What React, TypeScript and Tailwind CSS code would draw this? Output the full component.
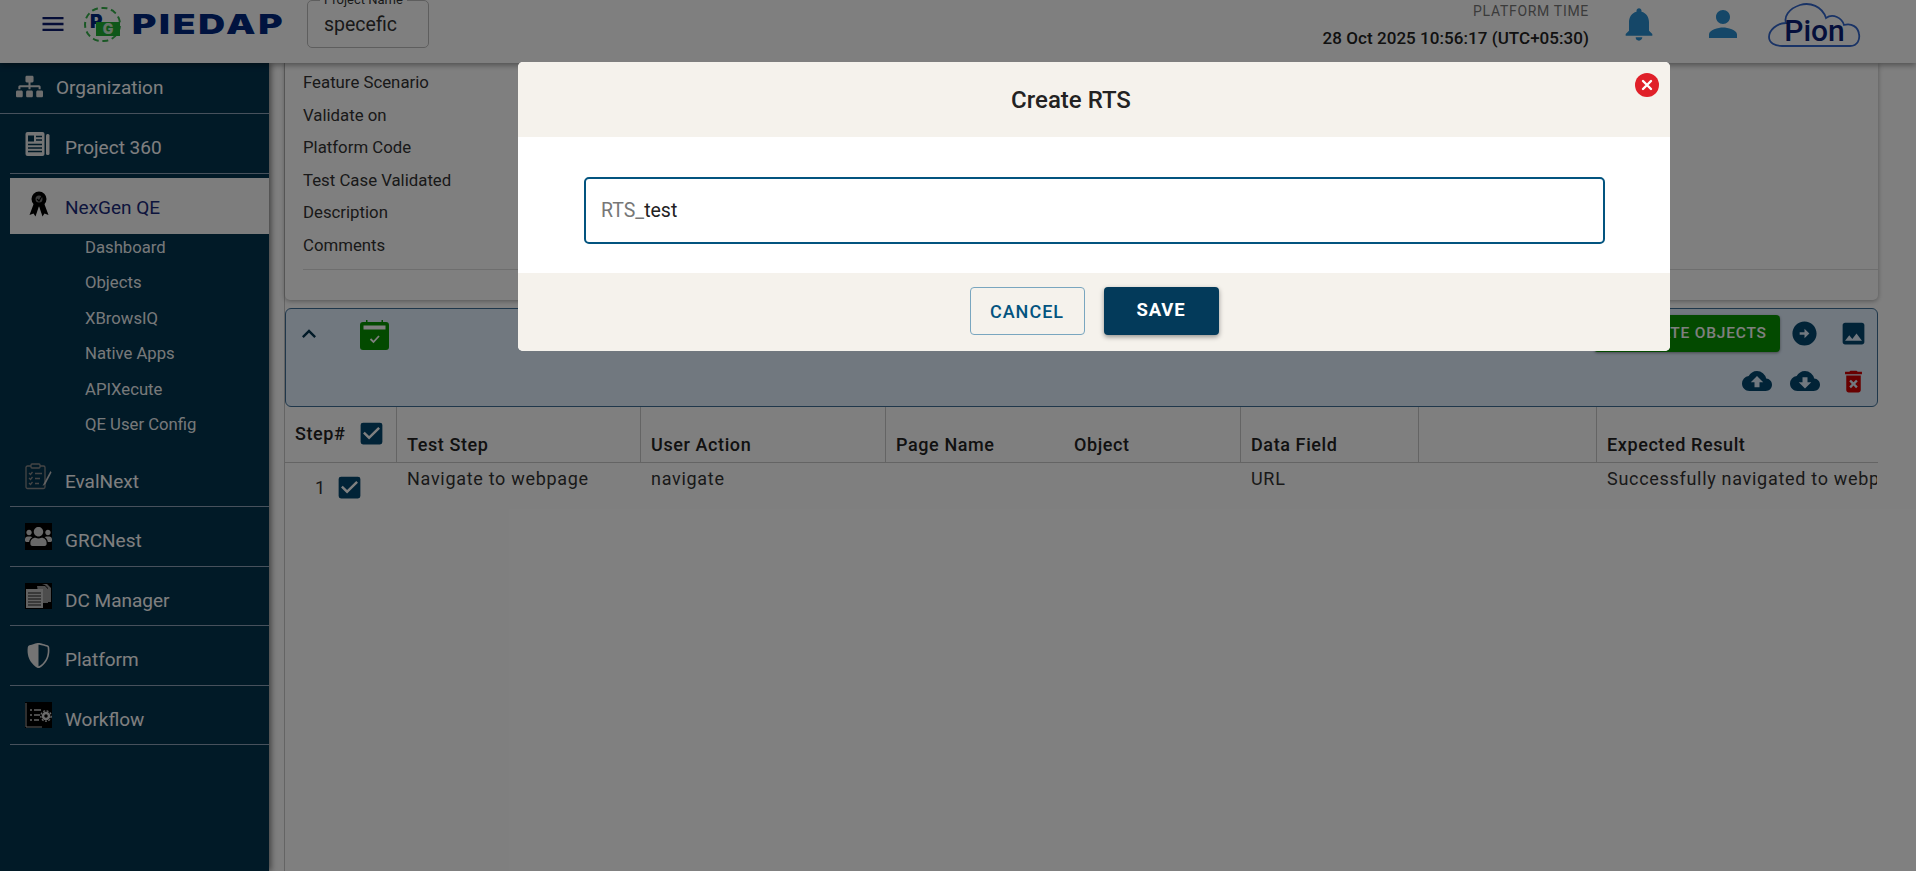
import { FaSitemap, FaUsers } from "react-icons/fa";
import { BsShieldShaded } from "react-icons/bs";
import {
  MdMenu,
  MdNotifications,
  MdPerson,
  MdKeyboardArrowUp,
  MdArrowCircleRight,
  MdImage,
  MdCloudUpload,
  MdCloudDownload,
  MdDeleteForever,
  MdCheckBox,
} from "react-icons/md";

const NewsIcon = () => (
  <svg width="25" height="25" viewBox="0 0 25 25">
    <rect x="0.500" y="1" width="19" height="24" rx="2" fill="#eaeaea" />
    <rect x="21" y="3" width="3.500" height="21" rx="1.500" fill="#eaeaea" />
    <rect x="3" y="4.500" width="6" height="6" fill="#03344f" />
    <path d="M11 5.500 h6 M11 9 h6 M3 13.500 h14 M3 17 h14 M3 20.500 h14" stroke="#03344f" strokeWidth="1.600" />
  </svg>
);

const AwardIcon = () => (
  <svg width="20" height="26" viewBox="0 0 20 26" fill="#000">
    <path d="M5 12 L0.500 24 L4.500 22.500 L6.500 25.500 L10 15 L13.500 25.500 L15.500 22.500 L19.500 24 L15 12 Z" />
    <circle cx="10" cy="8" r="7.500" />
    <circle cx="10" cy="8" r="3.500" fill="#777" />
    <path d="M8 8 L10 10 L13 5" stroke="#000" strokeWidth="1.200" fill="none" />
  </svg>
);

const EvalIcon = () => (
  <svg width="27" height="27" viewBox="0 0 27 27" fill="none" stroke="#8a8a8a" strokeWidth="1.300">
    <rect x="1" y="3" width="19" height="22.500" rx="1.500" />
    <rect x="6" y="1" width="9" height="4" rx="1" fill="#03344f" />
    <path d="M4 10 l1.500 1.500 l2 -2.500 M4 15 l1.500 1.500 l2 -2.500 M4 20 l1.500 1.500 l2 -2.500" />
    <path d="M10 10.500 h7 M10 15.500 h5 M10 20.500 h4" />
    <path d="M25.500 8 L19 20 L17.500 23 L20.500 21 L26.500 9.500 Z" fill="#c8c8c8" stroke="none" />
  </svg>
);

const DocsIcon = () => (
  <svg width="27" height="26" viewBox="0 0 27 26" className="bg-black">
    <path d="M12 3 h8 l3 3 v14 h-8 z M17 1 h5 l4 4 v14 h-3 V5 l-3 -3 z" fill="#9a9a9a" />
    <rect x="1" y="6" width="17" height="19" fill="#c4c4c4" />
    <path d="M3 10 h13 M3 13 h13 M3 16 h13 M3 19 h13 M3 22 h13" stroke="#222" strokeWidth="1" />
  </svg>
);

const FlowIcon = () => (
  <svg width="27" height="26" viewBox="0 0 27 26" className="bg-black">
    <path d="M1 1 v24 h16" stroke="#bbb" strokeWidth="1" fill="none" />
    <path d="M5 8 h2 M9 8 h7 M5 13 h2 M9 13 h6 M5 18 h2 M9 18 h5" stroke="#c8c8c8" strokeWidth="1.500" />
    <circle cx="21" cy="14" r="3" fill="none" stroke="#d8d8d8" strokeWidth="2.500" />
    <circle cx="21" cy="14" r="5.200" fill="none" stroke="#d8d8d8" strokeWidth="1.300" strokeDasharray="2 1.500" />
  </svg>
);

const CalendarCheck = () => (
  <svg width="29" height="30" viewBox="0 0 29 30">
    <path d="M6 0 h1.500 v3 h-1.500 z M21.500 0 h1.500 v3 h-1.500 z" fill="#079500" />
    <rect x="0" y="2" width="29" height="28" rx="3" fill="#079500" />
    <rect x="3.500" y="5.500" width="22" height="4" fill="#fff" />
    <path d="M10.500 19 L13.500 22 L19 16" stroke="#fff" strokeWidth="1.800" fill="none" />
  </svg>
);

const PiedapLogo = () => (
  <div className="flex items-center">
    <div className="relative w-[37px] h-[35px] rounded-full border-2 border-dashed border-[#34b04a]">
      <span className="absolute left-[4px] top-[3px] text-[19px] leading-[20px] font-black text-[#00277f] font-['Inter',sans-serif]">P</span>
      <span className="absolute left-[10px] top-[13px] w-[24px] h-[14px] bg-[#1fae33] text-[14px] leading-[14px] text-center font-black text-[#cfe8d0] font-['Inter',sans-serif]">G</span>
    </div>
    <span className="ml-[11px] w-[152px] text-[27px] leading-none font-black tracking-[2px] text-[#00277f] font-['Inter',sans-serif] scale-x-[1.375] origin-left">PIEDAP</span>
  </div>
);

const PionLogo = () => (
  <div className="relative w-[93px] h-[46px] flex items-end justify-center">
    <svg width="93" height="46" viewBox="0 0 93 46" fill="none" stroke="#3366cc" strokeWidth="1.800" className="absolute left-0 top-0">
      <path d="M14 45 H82 C90 45 92 38 91 33 C90 26 84 22 76 24 C74 17 65 12 58 17 C54 5 42 1 32 4 C20 8 16 16 18 22 C8 22 1 30 1 36 C1 42 7 45 14 45 Z" />
    </svg>
    <span className="relative -mb-[1px] text-[30px] leading-[34px] font-medium text-[#0a1f78] font-['Roboto',sans-serif]">Pion</span>
  </div>
);

const SubItem = ({ label }: { label: string }) => (
  <div className="h-[35.500px] pl-[85px] flex items-center text-[16.700px] text-white/95">{label}</div>
);

const NavItem = ({ label, icon }: { label: string; icon: React.ReactNode }) => (
  <div className="ml-[10px] h-[59.500px] border-b border-[#8fa3b8] pt-[10px] flex items-center">
    <span className="w-[55px] pl-[15px] pb-[10px] shrink-0">{icon}</span>
    <span className="text-[19px] text-white">{label}</span>
  </div>
);

const Sidebar = () => (
  <aside className="w-[269px] shrink-0 bg-[#03344f] text-[#fff] shadow-[2px_0_6px_rgba(0,0,0,0.5)] z-10">
    <div className="h-[51px] border-b border-[#8fa3b8] flex items-center">
      <FaSitemap className="ml-[16px] mr-[13px] mb-[4px] text-[#dcdcdc]" size={27} />
      <span className="text-[19px]">Organization</span>
    </div>
    <NavItem label="Project 360" icon={<NewsIcon />} />
    <div className="ml-[10px] mt-[4px] h-[56px] bg-[#fbfbfb] pt-[6px] flex items-center">
      <span className="w-[55px] pl-[19px] pb-[10px] shrink-0"><AwardIcon /></span>
      <span className="text-[19px] text-[#1a2a7a]">NexGen QE</span>
    </div>
    <div className="-mt-[4px]">
      <SubItem label="Dashboard" />
      <SubItem label="Objects" />
      <SubItem label="XBrowsIQ" />
      <SubItem label="Native Apps" />
      <SubItem label="APIXecute" />
      <SubItem label="QE User Config" />
    </div>
    <div className="mt-[5px]">
      <NavItem label="EvalNext" icon={<EvalIcon />} />
      <NavItem label="GRCNest" icon={<span className="block w-[27px] h-[27px] bg-black"><FaUsers className="text-[#d0d0d0]" size={27} /></span>} />
      <NavItem label="DC Manager" icon={<DocsIcon />} />
      <NavItem label="Platform" icon={<BsShieldShaded className="text-[#e8e8e8] ml-[1px]" size={25} />} />
      <NavItem label="Workflow" icon={<FlowIcon />} />
    </div>
  </aside>
);

const Header = () => (
  <header className="h-[63px] shrink-0 bg-white shadow-[0_2px_6px_rgba(0,0,0,0.4)] z-20 flex items-center pb-[15px] pl-[39px] pr-[55px]">
    <MdMenu className="text-[#0b1a6e]" size={28} />
    <div className="ml-[17px]"><PiedapLogo /></div>
    <div className="relative ml-[23px] w-[122px] h-[48px] border border-[#bdbdbd] rounded-[5px] flex items-center pl-[16px] pt-[1px] text-[19.500px] text-[#333]">
      specefic
      <span className="absolute left-[12px] -top-[9px] px-[4px] bg-white text-[13px] leading-[16px] text-[#333]">Project Name</span>
    </div>
    <div className="ml-auto mr-[1px] text-right">
      <div className="text-[14px] leading-[20px] tracking-[0.7px] text-[#777]">PLATFORM TIME</div>
      <div className="mt-[7px] text-[17px] leading-[20px] font-medium tracking-[0.05px] text-[#222]">28 Oct 2025 10:56:17 (UTC+05:30)</div>
    </div>
    <MdNotifications className="ml-[29px] text-[#2a8fd0]" size={40} />
    <MdPerson className="ml-[43px] text-[#2a8fd0]" size={42} />
    <div className="ml-[24px]"><PionLogo /></div>
  </header>
);

const TopCard = () => (
  <div className="rounded-b-[5px] bg-white shadow-[0_1px_5px_rgba(0,0,0,0.35)] pl-[18px] h-[237px]">
    <div className="pt-[7px] text-[16.800px] text-[#333] leading-[24px] flex flex-col gap-[8.500px]">
      <div>Feature Scenario</div>
      <div>Validate on</div>
      <div>Platform Code</div>
      <div>Test Case Validated</div>
      <div>Description</div>
      <div>Comments</div>
    </div>
    <div className="mt-[12px] border-t border-[#ddd]" />
  </div>
);

const ActionPanel = () => (
  <div className="mt-[8px] h-[99px] rounded-[6px] border border-[#3f6f96] bg-[#e2f0ff] flex justify-between pl-[9px] pr-[9px] pt-[6px]">
    <div className="flex items-start pt-[4px]">
      <MdKeyboardArrowUp className="text-[#03344f] mt-[1px]" size={28} />
      <span className="ml-[37px] mt-[1px]"><CalendarCheck /></span>
    </div>
    <div>
      <div className="flex items-center">
        <button className="w-[186px] h-[37px] rounded-[4px] bg-[#079500] text-[15.500px] font-medium tracking-[0.8px] text-white shadow-[0_1px_3px_rgba(0,0,0,0.4)]">
          GENERATE OBJECTS
        </button>
        <MdArrowCircleRight className="ml-[10px] text-[#03466e]" size={29} />
        <MdImage className="ml-[20px] text-[#03466e]" size={29} />
      </div>
      <div className="mt-[14px] flex justify-end items-center">
        <MdCloudUpload className="text-[#03466e]" size={30} />
        <MdCloudDownload className="ml-[18px] text-[#03466e]" size={30} />
        <MdDeleteForever className="ml-[19px] text-[#d00000]" size={29} />
      </div>
    </div>
  </div>
);

const Check = ({ className }: { className: string }) => <MdCheckBox className={`text-[#03466e] ${className}`} size={29} />;

const headCell = "h-[55px] border-r border-[#c8c8c8] pl-[10px] pb-[4px] flex items-end font-medium text-[#222]";

const StepTable = () => (
  <div className="text-[18px] tracking-[0.6px]">
    <div className="grid grid-cols-[112px_244px_245px_178px_177px_178px_178px_280px] border-b border-[#c8c8c8]">
      <div className="h-[55px] border-r border-[#c8c8c8] flex items-center pl-[10px] pb-[3px] font-medium text-[#222]">
        Step# <Check className="ml-[11px]" />
      </div>
      <div className={headCell}>Test Step</div>
      <div className={headCell}>User Action</div>
      <div className="h-[55px] pl-[10px] pb-[4px] flex items-end font-medium text-[#222]">Page Name</div>
      <div className={headCell}>Object</div>
      <div className={headCell}>Data Field</div>
      <div className={headCell} />
      <div className="h-[55px] pl-[10px] pb-[4px] flex items-end font-medium text-[#222] whitespace-nowrap">Expected Result</div>
    </div>
    <div className="grid grid-cols-[112px_244px_245px_178px_177px_178px_178px_280px] text-[#333] leading-[24px] tracking-[0.7px] pt-[4px]">
      <div className="flex items-center pl-[30px] pt-[6px] self-start">
        1 <Check className="ml-[9px]" />
      </div>
      <div className="pl-[10px]">Navigate to webpage</div>
      <div className="pl-[10px]">navigate</div>
      <div />
      <div />
      <div className="pl-[10px]">URL</div>
      <div />
      <div className="pl-[10px] whitespace-nowrap overflow-hidden">Successfully navigated to webpage</div>
    </div>
  </div>
);

const CreateRtsModal = () => (
  <div className="absolute inset-0 z-50 bg-black/50">
    <div className="relative mt-[62px] ml-[518px] w-[1152px] rounded-[5px] overflow-hidden bg-white">
      <div className="h-[75px] bg-[#f5f2ec] pr-[46px] flex items-center justify-center text-[24px] font-medium text-[#222]">Create RTS</div>
      <button className="absolute right-[11px] top-[11px] w-[24px] h-[24px] rounded-full bg-[#e02029] flex items-center justify-center">
        <svg width="12" height="12" viewBox="0 0 12 12" stroke="#fff" strokeWidth="2.400" strokeLinecap="round"><path d="M2 2 L10 10 M10 2 L2 10" /></svg>
      </button>
      <div className="h-[136px] px-[66px] pt-[40px]">
        <div className="w-[1021px] h-[67px] rounded-[5px] border-2 border-[#03547f] flex items-center pl-[15px] text-[19.500px]">
          <span className="text-[#777]">RTS_</span>
          <span className="text-[#222]">test</span>
        </div>
      </div>
      <div className="h-[78px] bg-[#f5f2ec] flex justify-center gap-[19px] pt-[14px]">
        <button className="w-[115px] h-[48px] rounded-[4px] border border-[#79a6bf] text-[18px] font-medium tracking-[1px] text-[#03547f]">CANCEL</button>
        <button className="w-[115px] h-[48px] rounded-[4px] bg-[#033a5a] text-[18.500px] font-bold tracking-[0.8px] text-white shadow-[0_2px_5px_rgba(0,0,0,0.4)]">SAVE</button>
      </div>
    </div>
  </div>
);

export default function App() {
  return (
    <div className="relative h-screen overflow-hidden flex flex-col bg-white font-['Roboto',sans-serif]">
      <Header />
      <div className="flex flex-1 min-h-0">
        <Sidebar />
        <main className="flex-1 min-w-0 pl-[15px] pr-[38px]">
          <div className="border-l border-[#c8c8c8] h-full">
            <TopCard />
            <ActionPanel />
            <StepTable />
          </div>
        </main>
      </div>
      <CreateRtsModal />
    </div>
  );
}
